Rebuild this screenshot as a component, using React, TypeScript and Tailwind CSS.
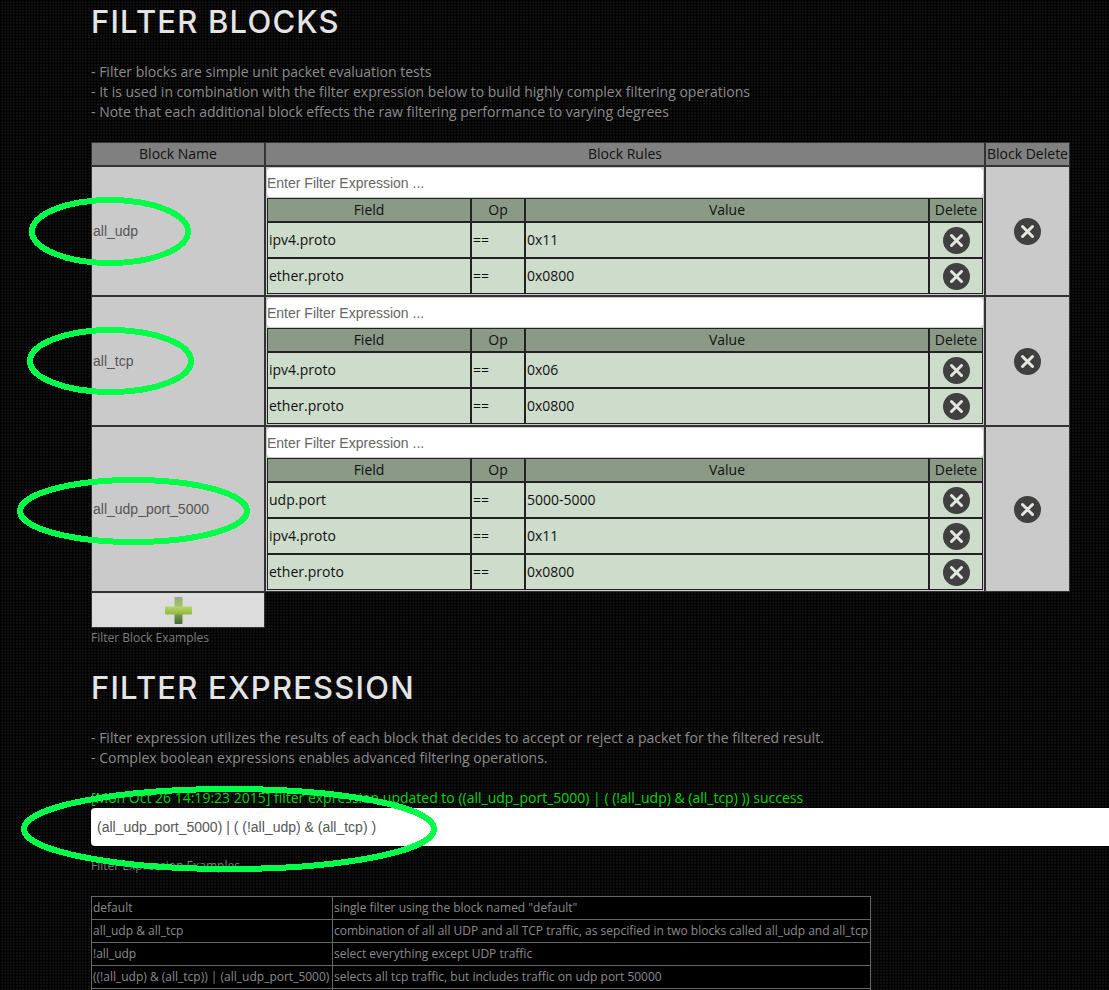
const BLOCKS = [
  {
    name: 'all_udp',
    rules: [
      ['ipv4.proto', '==', '0x11'],
      ['ether.proto', '==', '0x0800'],
    ],
  },
  {
    name: 'all_tcp',
    rules: [
      ['ipv4.proto', '==', '0x06'],
      ['ether.proto', '==', '0x0800'],
    ],
  },
  {
    name: 'all_udp_port_5000',
    rules: [
      ['udp.port', '==', '5000-5000'],
      ['ipv4.proto', '==', '0x11'],
      ['ether.proto', '==', '0x0800'],
    ],
  },
];

const EXAMPLES = [
  ['default', 'single filter using the block named "default"'],
  ['all_udp & all_tcp', 'combination of all all UDP and all TCP traffic, as sepcified in two blocks called all_udp and all_tcp'],
  ['!all_udp', 'select everything except UDP traffic'],
  ['((!all_udp) & (all_tcp)) | (all_udp_port_5000)', 'selects all tcp traffic, but includes traffic on udp port 50000'],
  ['\u00a0', '\u00a0'],
];

function DeleteIcon() {
  return (
    <svg width="27" height="27" viewBox="0 0 27 27" className="mx-auto block">
      <circle cx="13.5" cy="13.5" r="13.5" fill="#404040" />
      <path d="M8.5 8.5l10 10M18.5 8.5l-10 10" stroke="#e4e6e0" strokeWidth="3" strokeLinecap="round" />
    </svg>
  );
}

function PlusIcon() {
  return (
    <svg width="27" height="27" viewBox="0 0 27 27" className="block">
      <defs>
        <linearGradient id="plus-v" x1="0" y1="0" x2="0" y2="1">
          <stop offset="0" stopColor="#98a88c" />
          <stop offset="0.35" stopColor="#a4c45c" />
          <stop offset="1" stopColor="#3f6b36" />
        </linearGradient>
        <linearGradient id="plus-h" x1="0" y1="0" x2="0" y2="1">
          <stop offset="0" stopColor="#b6d768" />
          <stop offset="1" stopColor="#8fb83f" />
        </linearGradient>
      </defs>
      <rect x="9.5" y="0" width="8" height="27" rx="1" fill="url(#plus-v)" />
      <rect x="0" y="9.5" width="27" height="8" rx="1" fill="url(#plus-h)" />
    </svg>
  );
}

function Ellipse({ className, w, h }: { className: string; w: number; h: number }) {
  return (
    <svg width={w} height={h} viewBox={`0 0 ${w} ${h}`} className={`pointer-events-none absolute ${className}`}>
      <ellipse
        cx={w / 2}
        cy={h / 2}
        rx={w / 2 - 3}
        ry={h / 2 - 3}
        fill="none"
        stroke="#00ff48"
        strokeWidth="6"
        shapeRendering="crispEdges"
      />
    </svg>
  );
}

function BlockRules({ rules }: { rules: string[][] }) {
  return (
    <div>
      <div className="mb-px flex h-[29px] items-center rounded-[4px] bg-white text-[14px] text-[#666] [font-family:'Liberation_Sans',Arial,sans-serif]">
        Enter Filter Expression ...
      </div>
      <table className="w-full table-fixed border-separate border-spacing-0 text-[14px] leading-[20px] text-[#111]">
        <thead>
          <tr className="h-[24px] bg-[#8a9a87]">
            <th className="w-[204px] border border-[#222] font-normal">Field</th>
            <th className="w-[54px] border border-[#222] font-normal">Op</th>
            <th className="border border-[#222] font-normal">Value</th>
            <th className="w-[54px] border border-[#222] font-normal">Delete</th>
          </tr>
        </thead>
        <tbody>
          {rules.map((rule) => (
            <tr key={rule[0]} className="h-[36px] bg-[#cedccb]">
              {rule.map((cell, i) => (
                <td key={i} className="border border-[#222] pl-px">
                  {cell}
                </td>
              ))}
              <td className="border border-[#222]">
                <DeleteIcon />
              </td>
            </tr>
          ))}
        </tbody>
      </table>
    </div>
  );
}

export default function App() {
  return (
    <div className="h-[990px] overflow-hidden bg-[#101010] bg-[linear-gradient(#000_1px,transparent_1px),linear-gradient(90deg,#000_1px,transparent_1px)] bg-[size:3px_3px] [font-family:'Open_Sans',sans-serif]">
      <div className="relative pl-[91px]">
        {/* Filter blocks */}
        <h1 className="pt-[3px] text-[31px] leading-[38px] font-medium tracking-[1.2px] text-[#e4e4e4] [font-family:Inter,sans-serif]">
          FILTER BLOCKS
        </h1>
        <div className="mt-[21px] text-[14px] leading-[20px] text-[#8c8c8c]">
          <p>- Filter blocks are simple unit packet evaluation tests</p>
          <p>- It is used in combination with the filter expression below to build highly complex filtering operations</p>
          <p>- Note that each additional block effects the raw filtering performance to varying degrees</p>
        </div>

        <table className="mt-[20px] w-[979px] table-fixed border-separate border-spacing-0 text-[14px] leading-[20px]">
          <thead>
            <tr className="h-[24px] bg-[#808080] text-[#111]">
              <th className="w-[174px] border border-[#333] font-normal">Block Name</th>
              <th className="border border-[#333] font-normal">Block Rules</th>
              <th className="w-[85px] border border-[#333] px-0 font-normal whitespace-nowrap">Block Delete</th>
            </tr>
          </thead>
          <tbody>
            {BLOCKS.map((block) => (
              <tr key={block.name} className="bg-[#cacaca]">
                <td className="border border-[#333] pl-px text-[14px] text-[#555] [font-family:'Liberation_Sans',Arial,sans-serif]">
                  {block.name}
                </td>
                <td className="border border-[#333] p-px">
                  <BlockRules rules={block.rules} />
                </td>
                <td className="border border-[#333]">
                  <DeleteIcon />
                </td>
              </tr>
            ))}
          </tbody>
        </table>

        <div className="flex h-[36px] w-[174px] items-center justify-center border border-[#333] bg-[#dcdcdc]">
          <PlusIcon />
        </div>
        <p className="mt-px text-[12px] leading-[18px] text-[#7d7d7d]">Filter Block Examples</p>

        {/* Filter expression */}
        <h1 className="mt-[22px] text-[31px] leading-[38px] font-medium tracking-[1.2px] text-[#e4e4e4] [font-family:Inter,sans-serif]">
          FILTER EXPRESSION
        </h1>
        <div className="mt-[21px] text-[14px] leading-[20px] text-[#8c8c8c]">
          <p>- Filter expression utilizes the results of each block that decides to accept or reject a packet for the filtered result.</p>
          <p>- Complex boolean expressions enables advanced filtering operations.</p>
        </div>
        <p className="mt-[20px] text-[14px] leading-[20px] whitespace-nowrap text-[#00d800]">
          [Mon Oct 26 14:19:23 2015] filter expression updated to ((all_udp_port_5000) | ( (!all_udp) &amp; (all_tcp) )) success
        </p>
        <div className="flex h-[38px] items-center rounded-l-[4px] bg-white pl-[6px] text-[14px] text-[#555] [font-family:'Liberation_Sans',Arial,sans-serif]">
          (all_udp_port_5000) | ( (!all_udp) &amp; (all_tcp) )
        </div>
        <p className="mt-[11px] text-[12px] leading-[18px] text-[#7d7d7d]">Filter Expression Examples</p>

        <table className="mt-[21px] w-[780px] table-fixed border-collapse border border-[#444] bg-black text-[12px] leading-[18px] text-[#8c8c8c]">
          <tbody>
            {EXAMPLES.map((row, i) => (
              <tr key={i} className="h-[23px]">
                <td className="w-[241px] border border-[#666] pl-px whitespace-nowrap">{row[0]}</td>
                <td className="border border-[#666] pl-px whitespace-nowrap">{row[1]}</td>
              </tr>
            ))}
          </tbody>
        </table>

        {/* Hand-drawn highlight marks over the page */}
        <Ellipse className="top-[197px] left-[29px]" w={162} h={69} />
        <Ellipse className="top-[327px] left-[27px]" w={167} h={68} />
        <Ellipse className="top-[477px] left-[17px]" w={233} h={68} />
        <Ellipse className="top-[786px] left-[21px]" w={416} h={86} />
      </div>
    </div>
  );
}
